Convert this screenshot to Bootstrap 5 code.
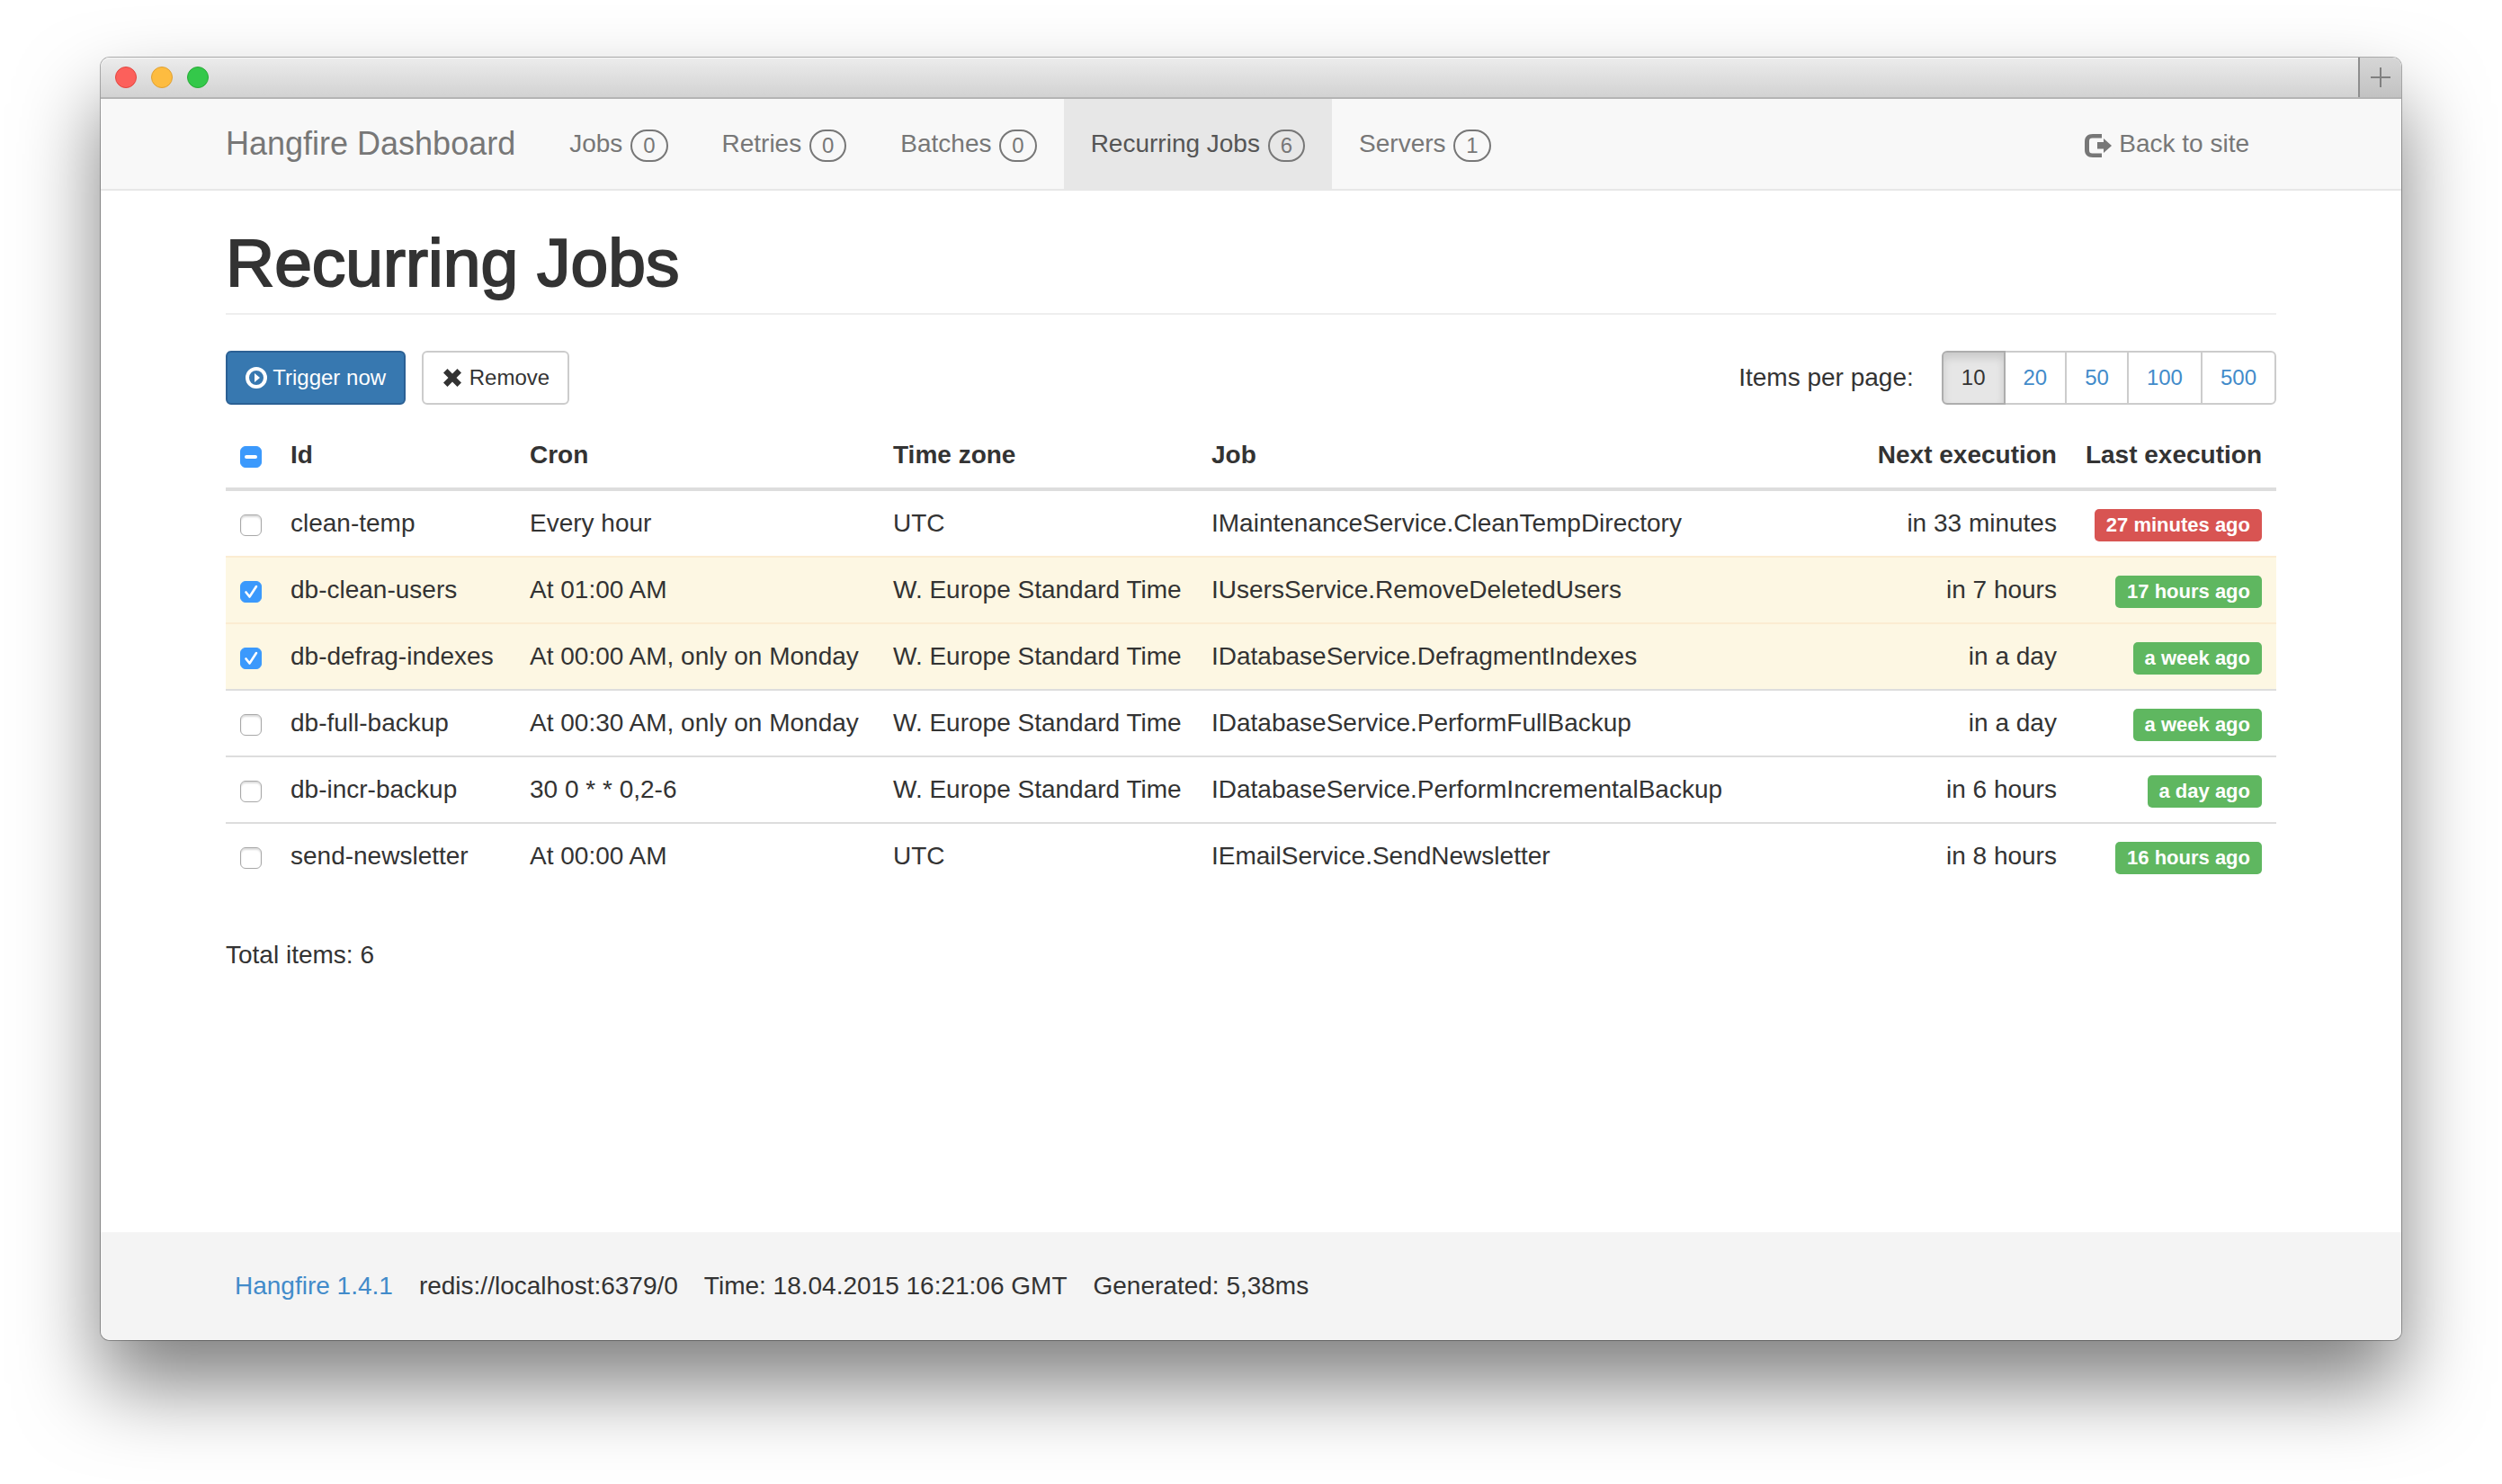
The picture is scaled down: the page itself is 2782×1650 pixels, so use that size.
<!DOCTYPE html>
<html lang="en">
<head>
<meta charset="utf-8">
<meta name="viewport" content="width=device-width, initial-scale=1">
<title>Recurring Jobs – Hangfire Dashboard</title>
<link href="https://cdn.jsdelivr.net/npm/bootstrap@5.3.0/dist/css/bootstrap.min.css" rel="stylesheet">
<style>
  body {
    font-family: "Liberation Sans", Arial, sans-serif;
    font-size: 28px;
    line-height: 40px;
    color: #333;
    background: #fff;
    padding: 64px 112px 160px;
  }
  a { color: #428bca; text-decoration: none; }
  .app-window {
    min-height: calc(100vh - 224px);
    border-radius: 10px;
    background: #fff;
    box-shadow: 0 0 0 1px rgba(0, 0, 0, .3), 0 50px 90px rgba(0, 0, 0, .5);
  }
  .content-width { width: 100%; max-width: 2280px; margin: 0 auto; }

  /* Title bar */
  .title-bar {
    height: 46px;
    padding-left: 16px;
    border-radius: 10px 10px 0 0;
    background: linear-gradient(#ececec, #d2d2d2);
    border-bottom: 2px solid #b4b4b4;
    box-shadow: inset 0 1px 0 #f7f7f7;
  }
  .light { width: 24px; height: 24px; border-radius: 50%; border: 1px solid #e2463f; background: #fc605b; }
  .light-min { border-color: #dfa033; background: #fdbc40; }
  .light-max { border-color: #27aa35; background: #34c84a; }
  .new-tab {
    width: 48px;
    color: #808080;
    background: linear-gradient(#d6d6d6, #c2c2c2);
    border: 0;
    border-left: 2px solid #8e8e8e;
  }

  /* Navigation */
  .top-nav { background: #f8f8f8; border-bottom: 2px solid #e7e7e7; padding: 0; }
  .top-nav .navbar-brand { font-size: 36px; line-height: 40px; color: #777; padding: 30px 30px 30px 0; margin: 0; }
  .top-nav .nav-link { color: #777; padding: 30px; white-space: nowrap; }
  .top-nav .nav-link.active { color: #555; background: #e7e7e7; margin-bottom: -2px; padding-bottom: 32px; }
  .count {
    display: inline-block;
    font-size: 24px;
    line-height: 24px;
    padding: 4px 12px;
    margin-left: 1px;
    vertical-align: -1px;
    border: 2px solid #777;
    border-radius: 20px;
    color: #777;
  }

  /* Heading */
  .page-title {
    font-size: 75px;
    line-height: 82px;
    font-weight: 500;
    -webkit-text-stroke: 2px #333;
    margin: 39px 0 40px;
    padding-bottom: 15px;
    border-bottom: 2px solid #eee;
  }

  /* Toolbar */
  .tool-btn {
    --bs-btn-font-size: 24px;
    --bs-btn-line-height: 36px;
    --bs-btn-padding-x: 20px;
    --bs-btn-padding-y: 10px;
    --bs-btn-border-width: 2px;
    --bs-btn-border-radius: 6px;
    --bs-btn-color: #333;
    --bs-btn-bg: #fff;
    --bs-btn-border-color: #ccc;
  }
  .tool-btn svg { vertical-align: -4px; }
  .tool-primary { --bs-btn-color: #fff; --bs-btn-bg: #3778b0; --bs-btn-border-color: #2b6094; }
  .tool-actions { gap: 18px; }
  .page-sizes { margin-left: 31px; }
  .page-sizes .tool-btn { --bs-btn-color: #428bca; }
  .page-sizes > .tool-btn:not(:first-child) { margin-left: -2px !important; }
  .page-sizes .tool-btn.active {
    --bs-btn-active-color: #333;
    --bs-btn-active-bg: #e6e6e6;
    --bs-btn-active-border-color: #adadad;
    box-shadow: inset 0 6px 10px rgba(0, 0, 0, .125);
  }

  /* Job table */
  .job-table { color: #333; margin: 20px 0 54px; --bs-table-bg: transparent; }
  .job-table > * > tr > * { padding: 16px; border: 0; color: #333; white-space: nowrap; }
  .job-table > thead > tr > th { border-bottom: 4px solid #ddd; }
  .job-table > tbody > tr + tr > td { border-top: 2px solid #ddd; }
  .job-table > tbody > tr.picked > td { background: #fdf7e3; border-top-color: #fbecd2; }
  .col-pick { width: 56px; }
  .col-id { width: 266px; }
  .col-cron { width: 404px; }
  .col-zone { width: 354px; }
  .col-last { width: 228px; }
  .pick {
    display: inline-block;
    width: 24px;
    height: 24px;
    margin: 0;
    vertical-align: middle;
    border: 1px solid #a8a8a8;
    border-radius: 6px !important;
    background-color: #fff;
    box-shadow: inset 0 2px 2px rgba(0, 0, 0, .14);
  }
  .pick:checked, .pick:indeterminate { background-color: #3b99fc !important; border-color: #3b99fc !important; box-shadow: none; background-size: 24px 24px; }
  .pick:checked { background-image: url("data:image/svg+xml,%3Csvg xmlns='http://www.w3.org/2000/svg' viewBox='0 0 24 24'%3E%3Cpath d='M6.500 12.500l4 5 7.500-11.500' fill='none' stroke='%23fff' stroke-width='2.600' stroke-linecap='round' stroke-linejoin='round'/%3E%3C/svg%3E") !important; }
  .pick:indeterminate { background-image: url("data:image/svg+xml,%3Csvg xmlns='http://www.w3.org/2000/svg' viewBox='0 0 24 24'%3E%3Cpath d='M7 12h10' stroke='%23fff' stroke-width='4' stroke-linecap='round'/%3E%3C/svg%3E") !important; }
  .tag {
    display: inline-block;
    font-size: 22px;
    line-height: 22px;
    font-weight: 700;
    padding: 7px 13px;
    border-radius: 5px;
    color: #fff;
    background: #5fb760;
  }
  .tag-late { background: #d85452; }

  /* Footer */
  .page-footer { background: #f4f4f4; padding: 40px 0; border-radius: 0 0 10px 10px; }
  .foot-list { gap: 29px; padding: 0 10px; }
</style>
</head>
<body>
<div class="app-window d-flex flex-column">

  <div class="title-bar d-flex align-items-center gap-3 overflow-hidden">
    <span class="light"></span>
    <span class="light light-min"></span>
    <span class="light light-max"></span>
    <button class="new-tab ms-auto align-self-stretch d-flex align-items-center justify-content-center p-0" type="button" aria-label="New tab">
      <svg width="22" height="22" viewBox="0 0 22 22" aria-hidden="true"><path d="M11 0v22M0 11h22" stroke="currentColor" stroke-width="2"/></svg>
    </button>
  </div>

  <nav class="top-nav">
    <div class="content-width d-flex">
      <a class="navbar-brand" href="#">Hangfire Dashboard</a>
      <ul class="nav flex-nowrap">
        <li><a class="nav-link" href="#">Jobs <span class="count">0</span></a></li>
        <li><a class="nav-link" href="#">Retries <span class="count">0</span></a></li>
        <li><a class="nav-link" href="#">Batches <span class="count">0</span></a></li>
        <li><a class="nav-link active" aria-current="page" href="#">Recurring Jobs <span class="count">6</span></a></li>
        <li><a class="nav-link" href="#">Servers <span class="count">1</span></a></li>
      </ul>
      <ul class="nav ms-auto">
        <li><a class="nav-link" href="#"><svg width="30" height="26" viewBox="0 0 30 26" fill="currentColor" aria-hidden="true"><path d="M19 0v4.500H8.500C6 4.500 5 5.500 5 8v10c0 2.500 1 3.500 3.500 3.500H19V26H9C3 26 0 23 0 17.500v-9C0 3 3 0 9 0z"/><path d="M14 9h7V5l9 8-9 8v-4.500h-7z"/></svg> Back to site</a></li>
      </ul>
    </div>
  </nav>

  <main class="content-width flex-grow-1">
    <h1 class="page-title">Recurring Jobs</h1>

    <div class="d-flex align-items-center tool-actions">
      <button type="button" class="btn tool-btn tool-primary"><svg width="24" height="24" viewBox="0 0 24 24" aria-hidden="true"><circle cx="12" cy="12" r="10" fill="none" stroke="currentColor" stroke-width="4"/><path d="M10 7l6 5-6 5z" fill="currentColor"/></svg> Trigger now</button>
      <button type="button" class="btn tool-btn"><svg width="24" height="24" viewBox="0 0 24 24" fill="currentColor" aria-hidden="true"><path d="M6.500 2L12 7.500 17.500 2 22 6.500 16.500 12 22 17.500 17.500 22 12 16.500 6.500 22 2 17.500 7.500 12 2 6.500z"/></svg> Remove</button>
      <div class="ms-auto d-flex align-items-center">
        <span id="size-label">Items per page:</span>
        <div class="btn-group page-sizes" role="group" aria-labelledby="size-label">
          <a class="btn tool-btn active" href="#">10</a>
          <a class="btn tool-btn" href="#">20</a>
          <a class="btn tool-btn" href="#">50</a>
          <a class="btn tool-btn" href="#">100</a>
          <a class="btn tool-btn" href="#">500</a>
        </div>
      </div>
    </div>

    <table class="table job-table">
      <thead>
        <tr>
          <th class="col-pick"><input class="form-check-input pick" type="checkbox" id="pick-all" aria-label="Select all jobs"></th>
          <th class="col-id">Id</th>
          <th class="col-cron">Cron</th>
          <th class="col-zone">Time zone</th>
          <th>Job</th>
          <th class="text-end">Next execution</th>
          <th class="col-last text-end">Last execution</th>
        </tr>
      </thead>
      <tbody>
        <tr>
          <td><input class="form-check-input pick" type="checkbox" id="job-1"></td>
          <td><label for="job-1">clean-temp</label></td>
          <td>Every hour</td><td>UTC</td><td>IMaintenanceService.CleanTempDirectory</td>
          <td class="text-end">in 33 minutes</td><td class="text-end"><span class="tag tag-late">27 minutes ago</span></td>
        </tr>
        <tr class="picked">
          <td><input class="form-check-input pick" type="checkbox" id="job-2" checked></td>
          <td><label for="job-2">db-clean-users</label></td>
          <td>At 01:00 AM</td><td>W. Europe Standard Time</td><td>IUsersService.RemoveDeletedUsers</td>
          <td class="text-end">in 7 hours</td><td class="text-end"><span class="tag">17 hours ago</span></td>
        </tr>
        <tr class="picked">
          <td><input class="form-check-input pick" type="checkbox" id="job-3" checked></td>
          <td><label for="job-3">db-defrag-indexes</label></td>
          <td>At 00:00 AM, only on Monday</td><td>W. Europe Standard Time</td><td>IDatabaseService.DefragmentIndexes</td>
          <td class="text-end">in a day</td><td class="text-end"><span class="tag">a week ago</span></td>
        </tr>
        <tr>
          <td><input class="form-check-input pick" type="checkbox" id="job-4"></td>
          <td><label for="job-4">db-full-backup</label></td>
          <td>At 00:30 AM, only on Monday</td><td>W. Europe Standard Time</td><td>IDatabaseService.PerformFullBackup</td>
          <td class="text-end">in a day</td><td class="text-end"><span class="tag">a week ago</span></td>
        </tr>
        <tr>
          <td><input class="form-check-input pick" type="checkbox" id="job-5"></td>
          <td><label for="job-5">db-incr-backup</label></td>
          <td>30 0 * * 0,2-6</td><td>W. Europe Standard Time</td><td>IDatabaseService.PerformIncrementalBackup</td>
          <td class="text-end">in 6 hours</td><td class="text-end"><span class="tag">a day ago</span></td>
        </tr>
        <tr>
          <td><input class="form-check-input pick" type="checkbox" id="job-6"></td>
          <td><label for="job-6">send-newsletter</label></td>
          <td>At 00:00 AM</td><td>UTC</td><td>IEmailService.SendNewsletter</td>
          <td class="text-end">in 8 hours</td><td class="text-end"><span class="tag">16 hours ago</span></td>
        </tr>
      </tbody>
    </table>

    <p class="mb-5">Total items: 6</p>
  </main>

  <footer class="page-footer">
    <ul class="content-width list-unstyled d-flex foot-list">
      <li><a href="#">Hangfire 1.4.1</a></li>
      <li>redis://localhost:6379/0</li>
      <li>Time: 18.04.2015 16:21:06 GMT</li>
      <li>Generated: 5,38ms</li>
    </ul>
  </footer>
</div>

<script src="https://cdn.jsdelivr.net/npm/bootstrap@5.3.0/dist/js/bootstrap.bundle.min.js"></script>
<script>
  document.getElementById('pick-all').indeterminate = true;
</script>
</body>
</html>
